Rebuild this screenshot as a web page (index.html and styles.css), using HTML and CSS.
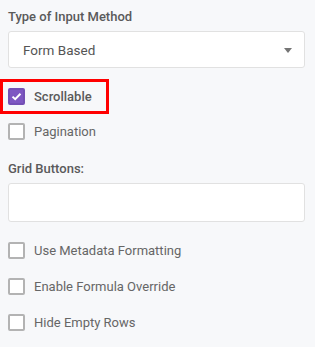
FILE: index.html
```html
<!DOCTYPE html>
<html>
<head>
<meta charset="utf-8">
<link rel="stylesheet" href="styles.css">
</head>
<body>
<div class="panel">
  <div class="field-label">Type of Input Method</div>
  <div class="select">
    <span class="select-text">Form Based</span>
    <svg class="caret" width="8" height="5" viewBox="0 0 8 5"><path d="M0 0H8L4 5Z" fill="#757575"/></svg>
  </div>
  <div class="highlight">
    <label class="check-row">
      <span class="box checked">
        <svg width="11" height="9" viewBox="0 0 11 9"><path d="M1.5 4.6L4.2 7.2L9.5 1.8" fill="none" stroke="#fff" stroke-width="2"/></svg>
      </span>
      <span class="check-text strong">Scrollable</span>
    </label>
  </div>
  <label class="check-row pag">
    <span class="box"></span>
    <span class="check-text">Pagination</span>
  </label>
  <div class="field-label grid-label">Grid Buttons:</div>
  <div class="input"></div>
  <div class="checks">
    <label class="check-row"><span class="box"></span><span class="check-text">Use Metadata Formatting</span></label>
    <label class="check-row"><span class="box"></span><span class="check-text">Enable Formula Override</span></label>
    <label class="check-row"><span class="box"></span><span class="check-text">Hide Empty Rows</span></label>
  </div>
</div>
</body>
</html>
```
FILE: styles.css
```css
html, body {
  margin: 0;
  padding: 0;
  background: #f7f8fa;
}
body {
  font-family: Roboto, "Noto Sans", sans-serif;
  color: #5f5f5f;
}
.panel {
  padding: 9px 10px 0 8px;
  display: flex;
  flex-direction: column;
}
.field-label {
  font-size: 13px;
  font-weight: 500;
  line-height: 16px;
  color: #5a5a5a;
}
.select {
  margin-top: 6px;
  height: 37px;
  box-sizing: border-box;
  background: #fff;
  border: 1px solid #e1e1e1;
  border-radius: 3px;
  display: flex;
  align-items: center;
  justify-content: space-between;
  padding: 0 12px 0 14px;
}
.select-text {
  font-size: 13.5px;
  color: #555;
}
.caret {
  display: block;
  margin-top: 1px;
}
.highlight {
  margin: 11px 0 0 -8px;
  align-self: flex-start;
  border: 3px solid #f00;
  padding: 6px 14px 6px 5px;
}
.check-row {
  display: flex;
  align-items: center;
  gap: 9px;
  height: 17px;
}
.box {
  width: 17px;
  height: 17px;
  box-sizing: border-box;
  border: 2px solid #b3b3b3;
  border-radius: 2px;
  background: #fff;
  display: flex;
  align-items: center;
  justify-content: center;
  flex: none;
}
.box.checked {
  background: #7e57c2;
  border-color: #7450b5;
}
.box.checked svg {
  display: block;
}
.check-text {
  font-size: 13px;
  color: #666;
}
.check-text.strong {
  font-weight: 500;
  color: #5a5a5a;
}
.pag {
  margin-top: 9px;
}
.grid-label {
  margin-top: 21px;
}
.input {
  margin-top: 6px;
  height: 39px;
  box-sizing: border-box;
  background: #fff;
  border: 1px solid #e1e1e1;
  border-radius: 3px;
}
.checks {
  margin-top: 20px;
  display: flex;
  flex-direction: column;
  gap: 19px;
}
.checks .check-row {
  height: 17px;
}
```
